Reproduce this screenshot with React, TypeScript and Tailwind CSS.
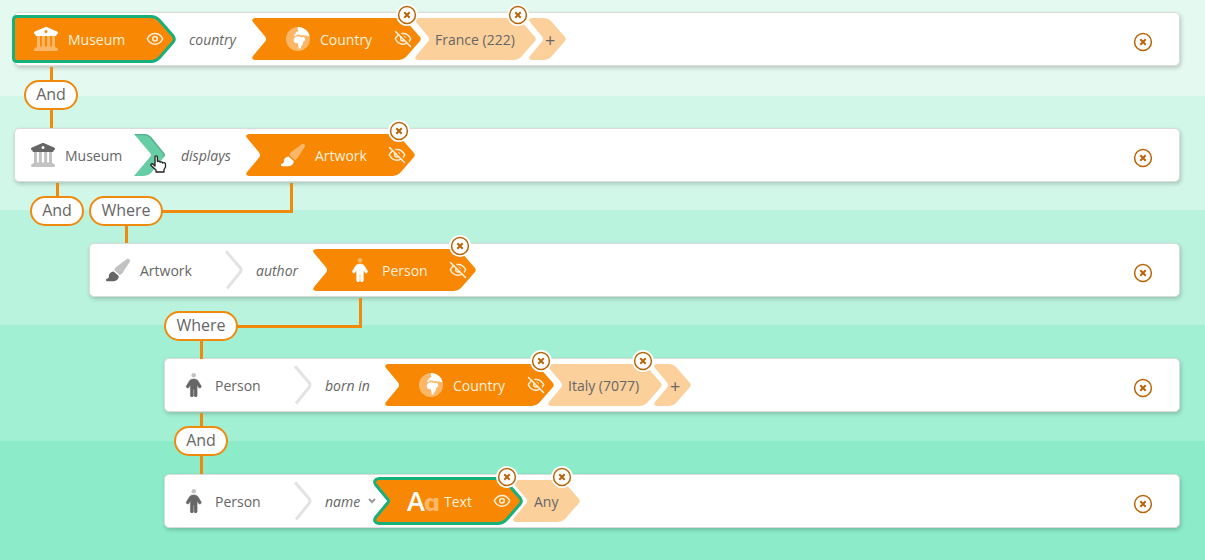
import React from "react";

const ORANGE = "#f88703";
const GREEN = "#17b07a";

function Museum({ light = false }: { light?: boolean }) {
  return (
    <svg viewBox="0 0 512 512" className="block size-6 shrink-0" fill={light ? "#fff" : "#666"}>
      <path
        fillRule="evenodd"
        d="M243.4 2.6l-224 96c-14 6-21.8 21-18.7 35.8S16.8 160 32 160v8c0 13.300 10.700 24 24 24H456c13.300 0 24-10.700 24-24v-8c15.200 0 28.300-10.700 31.300-25.600s-4.800-29.900-18.700-35.800l-224-96c-8-3.400-17.200-3.400-25.200 0zM256 64a32 32 0 1 1 0 64 32 32 0 1 1 0-64z"
      />
      <path
        opacity="0.4"
        d="M128 192H64V420.300c-.6 .3-1.200 .7-1.800 1.100l-48 32c-11.700 7.800-17 22.400-12.900 35.900S17.900 512 32 512H480c14.100 0 26.500-9.200 30.600-22.700s-1.100-28.100-12.900-35.900l-48-32c-.6-.4-1.200-.7-1.800-1.100V192H384V416H344V192H280V416H232V192H168V416H128V192z"
      />
    </svg>
  );
}

function Brush({ light = false }: { light?: boolean }) {
  return (
    <svg viewBox="32 -16 544 544" className="block size-6 shrink-0" fill={light ? "#fff" : "#666"}>
      <path
        opacity="0.4"
        d="M339.300 367.100c27.300-3.900 51.900-19.400 67.200-42.900L568.200 74.100c12.600-19.500 9.400-45.300-7.600-61.200S517.700-4.400 499.100 9.600L262.400 187.200c-24 18-38.200 46.100-38.400 76.100L339.300 367.100z"
      />
      <path d="M319.700 392.500l-116-104.400C143.900 290.300 96 339.600 96 400c0 3.900 .2 7.800 .6 11.600C98.400 429.100 86.400 448 68.800 448H64c-17.700 0-32 14.300-32 32s14.300 32 32 32H208c61.900 0 112-50.100 112-112c0-2.500-.1-5-.2-7.500z" />
    </svg>
  );
}

function Person({ light = false }: { light?: boolean }) {
  return (
    <svg viewBox={light ? "-96 0 512 512" : "-112 0 512 512"} className="block size-6 shrink-0" fill={light ? "#fff" : "#666"}>
      <circle cx="160" cy="48" r="48" opacity="0.4" />
      <path
        stroke={light ? "#fff" : "#666"}
        strokeWidth="10"
        d="M152 352V480c0 17.700-14.300 32-32 32s-32-14.300-32-32V256.900L59.400 304.500c-9.100 15.100-28.800 20-43.900 10.900s-20-28.800-10.900-43.900l58.300-97c17.400-28.900 48.600-46.600 82.300-46.600h29.700c33.700 0 64.900 17.700 82.300 46.600l58.300 97c9.100 15.100 4.200 34.800-10.900 43.900s-34.800 4.200-43.900-10.900L232 256.900V480c0 17.700-14.300 32-32 32s-32-14.300-32-32V352H152z"
      />
    </svg>
  );
}

function Globe() {
  return (
    <svg viewBox="0 0 24 24" className="block size-6 shrink-0" fill="#fff">
      <circle cx="12" cy="12" r="12" opacity="0.4" />
      <path d="M11.500 0C17.500 -.2 22.500 4 23.600 9L21.500 9.200 20 8.300 18 8.600 16.500 7.800 15.500 8.800 13.500 7.500 11 7.600 9.500 9 8 8.600 8.600 7 10.500 6.300 9.500 5.300 12.300 4.300z" />
      <path d="M9.300 9.800 13 9.300 15 10.200 18.300 10 19.300 12.200 18.800 13.500 17 15.300 16.600 17.800 15.300 19.300 14.600 21.300 12.800 21.700 12.300 18.800 11.800 16.300 9 16 7.800 14.300 7.900 12z" />
    </svg>
  );
}

function Letters() {
  return (
    <span className="flex w-8 shrink-0 items-baseline pt-[2px] font-['Open_Sans'] text-[27px] leading-6 font-semibold text-white">
      A<span className="-ml-px font-['DejaVu_Sans'] text-[23px] font-bold opacity-40">ɑ</span>
    </span>
  );
}

function Eye({ off = false }: { off?: boolean }) {
  return (
    <svg viewBox="0 0 18 18" className="block size-[18px] shrink-0" fill="none" stroke="#fff1dc" strokeWidth="1.500" strokeLinecap="round" strokeLinejoin="round">
      <path d="M1.300 8.800C3 5.200 5.600 3.400 9 3.400S15 5.200 16.700 8.800C15 12.400 12.400 14.200 9 14.200S3 12.400 1.300 8.800z" />
      <circle cx="9" cy="8.800" r="2.300" />
      {off && (
        <>
          <path d="M3 .8 18 15.800" stroke={ORANGE} strokeWidth="2" />
          <path d="M1.500 1.500 16.500 16.500" />
        </>
      )}
    </svg>
  );
}

function Remove({ className = "" }: { className?: string }) {
  return (
    <svg viewBox="0 0 22 22" className={`block size-[22px] shrink-0 ${className}`} fill="none" stroke="#b86408">
      <circle cx="11" cy="11" r="9.600" fill="#fff" stroke="#fff" strokeWidth="2.600" />
      <circle cx="11" cy="11" r="8.400" strokeWidth="1.500" />
      <path d="M8.300 8.300 13.700 13.700M13.700 8.300 8.300 13.700" strokeWidth="2" />
    </svg>
  );
}

function chipPath(w: number, notch: boolean) {
  const left = notch
    ? `L3 42Q-1.500 41.500 1 38L13.300 23.300Q14.800 21 13.300 18.700L1 4Q-1.500 .5 3 0Z`
    : `L2 42Q0 42 0 40L0 2Q0 0 2 0Z`;
  return `M3 0L${w - 22} 0Q${w - 18} 0 ${w - 15} 3L${w - 1} 19Q${w + 0.5} 21 ${w - 1} 23L${w - 15} 39Q${w - 18} 42 ${w - 22} 42${left}`;
}

type ChipProps = {
  w: number;
  className?: string;
  pale?: boolean;
  notch?: boolean;
  selected?: boolean;
  remove?: string;
  children: React.ReactNode;
};

function Chip({ w, className = "", pale = false, notch = true, selected = false, remove, children }: ChipProps) {
  return (
    <div className={`relative flex h-[42px] shrink-0 items-center ${pale ? "text-[#666]" : "text-[#fff1dc]"} ${className}`} style={{ width: w }}>
      <svg className="absolute inset-0 overflow-visible" width={w} height="42">
        {selected && <path d={chipPath(w, notch)} fill={GREEN} stroke={GREEN} strokeWidth="6" strokeLinejoin="round" />}
        <path d={chipPath(w, notch)} fill={pale ? "#fbd09b" : ORANGE} />
      </svg>
      <div className="relative flex w-full items-center">{children}</div>
      {remove && <Remove className={`absolute -top-[14px] z-10 ${remove}`} />}
    </div>
  );
}

function Chevron() {
  return (
    <svg viewBox="0 0 20 42" className="block h-[42px] w-5 shrink-0" fill="none" stroke="#e3e3e3" strokeWidth="3">
      <path d="M1 2.300 15 18.500Q17 21 15 23.500L2 39.500" />
    </svg>
  );
}

function ActiveChevron() {
  return (
    <div className="relative h-[42px] w-8 shrink-0">
      <svg viewBox="0 0 32 42" className="block h-[42px] w-8">
        <path d="M0 0H10Q14 0 17 3L30 19Q31.500 21 30 23L17 39Q14 42 10 42H0L16 23Q18 21 16 19Z" fill="#66cda5" />
        <path d="M1 .6H10Q14 .6 16.700 3.500L29.500 19.300Q31 21 29.500 22.700" fill="none" stroke="#55b28e" strokeWidth="1.300" />
      </svg>
      <svg viewBox="0 0 17 18" className="absolute top-[21px] left-[16px] h-[18px] w-[17px]" fill="#fff" stroke="#222" strokeWidth="1.300" strokeLinejoin="round">
        <path d="M5 11V2Q5 .8 6.200 .8T7.400 2V6.500Q9.800 5.300 10 7.200 12.300 6.200 12.500 8 15.500 7 15.500 9.500V12L14 14.500V17H6V15L1 10.500Q.5 8.500 2.500 8.700L5 11Z" />
      </svg>
    </div>
  );
}

function Pill({ className, children }: { className: string; children: React.ReactNode }) {
  return (
    <div className={`absolute z-20 flex h-[30px] items-center justify-center rounded-full border-2 border-[#f08a0c] bg-white pb-[2px] text-base leading-none text-[#666] ${className}`}>
      {children}
    </div>
  );
}

function Line({ className }: { className: string }) {
  return <div className={`absolute z-10 border-[#f08a0c] ${className}`} />;
}

function Card({ children }: { children: React.ReactNode }) {
  return (
    <div className="relative flex h-[54px] items-center rounded-[5px] border border-[#d9dcda] bg-white shadow-[1px_2px_4px_rgba(0,0,0,0.2)]">
      {children}
      <Remove className="mt-[5px] mr-[25px] ml-auto" />
    </div>
  );
}

function Label({ className, children }: { className: string; children: React.ReactNode }) {
  return <span className={`shrink-0 pt-[2px] whitespace-nowrap ${className}`}>{children}</span>;
}

export default function App() {
  return (
    <div className="h-[560px] overflow-hidden font-['Open_Sans','Noto_Sans',sans-serif] text-sm leading-5 text-[#666]">
      <section className="relative h-24 bg-[#e4f9f0] pt-3 pr-[25px] pl-[14px]">
        <Card>
          <Chip w={158} notch={false} selected>
            <span className="ml-[19px]"><Museum light /></span>
            <Label className="ml-[10px] w-[78px]">Museum</Label>
            <Eye />
          </Chip>
          <Label className="ml-4 w-[63px] italic">country</Label>
          <Chip w={169} remove="right-[3px]">
            <span className="ml-[34px]"><Globe /></span>
            <Label className="ml-[10px] w-[74px]">Country</Label>
            <Eye off />
          </Chip>
          <Chip w={121} className="-ml-[6px]" pale remove="right-[7px]"><Label className="ml-5">France (222)</Label></Chip>
          <Chip w={37} className="-ml-[7px]" pale><Label className="ml-4 text-lg">+</Label></Chip>
        </Card>
        <Line className="top-[67px] left-[50px] h-[61px] border-l-[3px]" />
        <Pill className="top-20 left-6 w-[54px]">And</Pill>
      </section>

      <section className="relative h-[114px] bg-[#d0f7e8] pt-8 pr-[25px] pl-[14px]">
        <Card>
          <span className="ml-4"><Museum /></span>
          <Label className="ml-[10px] w-[69px]">Museum</Label>
          <ActiveChevron />
          <Label className="ml-[15px] w-[65px] italic">displays</Label>
          <Chip w={169} remove="right-[5px]">
            <span className="ml-[35px]"><Brush light /></span>
            <Label className="ml-[10px] w-[73px]">Artwork</Label>
            <Eye off />
          </Chip>
        </Card>
        <Line className="top-[87px] left-[56px] h-4 border-l-[3px]" />
        <Line className="top-[87px] left-40 h-[30px] w-[133px] border-r-[3px] border-b-[3px]" />
        <Line className="top-[128px] left-[125px] h-[19px] border-l-[3px]" />
        <Pill className="top-[100px] left-[30px] w-[54px]">And</Pill>
        <Pill className="top-[100px] left-[89px] w-[74px]">Where</Pill>
      </section>

      <section className="relative h-[115px] bg-[#b9f3de] pt-[33px] pr-[25px] pl-[89px]">
        <Card>
          <span className="ml-4"><Brush /></span>
          <Label className="ml-[10px] w-[85px]">Artwork</Label>
          <Chevron />
          <Label className="ml-[11px] w-[57px] italic">author</Label>
          <Chip w={163} remove="right-[5px]">
            <span className="ml-[35px]"><Person light /></span>
            <Label className="ml-[10px] w-[67px]">Person</Label>
            <Eye off />
          </Chip>
        </Card>
        <Line className="top-[88px] left-[234px] h-[30px] w-32 border-r-[3px] border-b-[3px]" />
        <Line className="top-[130px] left-[200px] h-[19px] border-l-[3px]" />
        <Pill className="top-[101px] left-[164px] w-[74px]">Where</Pill>
      </section>

      <section className="relative h-[116px] bg-[#a2f0d3] pt-[33px] pr-[25px] pl-[164px]">
        <Card>
          <span className="ml-4"><Person /></span>
          <Label className="ml-[10px] w-[79px]">Person</Label>
          <Chevron />
          <Label className="ml-[11px] w-[60px] italic">born in</Label>
          <Chip w={169} remove="right-[2px]">
            <span className="ml-[34px]"><Globe /></span>
            <Label className="ml-[10px] w-[74px]">Country</Label>
            <Eye off />
          </Chip>
          <Chip w={114} className="-ml-[6px]" pale remove="right-2"><Label className="ml-5">Italy (7077)</Label></Chip>
          <Chip w={37} className="-ml-2" pale><Label className="ml-4 text-lg">+</Label></Chip>
        </Card>
        <Line className="top-[88px] left-[200px] h-[61px] border-l-[3px]" />
        <Pill className="top-[101px] left-[174px] w-[54px]">And</Pill>
      </section>

      <section className="relative h-[119px] bg-[#8cecc9] pt-[33px] pr-[25px] pl-[164px]">
        <Card>
          <span className="ml-4"><Person /></span>
          <Label className="ml-[10px] w-[79px]">Person</Label>
          <Chevron />
          <Label className="ml-[11px] w-[35px] italic">name</Label>
          <svg viewBox="0 0 8 6" className="ml-2 h-[6px] w-2 shrink-0" fill="none" stroke="#999" strokeWidth="2"><path d="M1 1l3 3 3-3" /></svg>
          <Chip w={144} selected remove="right-[2px]">
            <span className="ml-[31px]"><Letters /></span>
            <Label className="ml-[5px] w-[49px]">Text</Label>
            <Eye />
          </Chip>
          <Chip w={67} className="-ml-[7px]" pale remove="right-[7px]"><Label className="ml-[21px]">Any</Label></Chip>
        </Card>
      </section>
    </div>
  );
}
